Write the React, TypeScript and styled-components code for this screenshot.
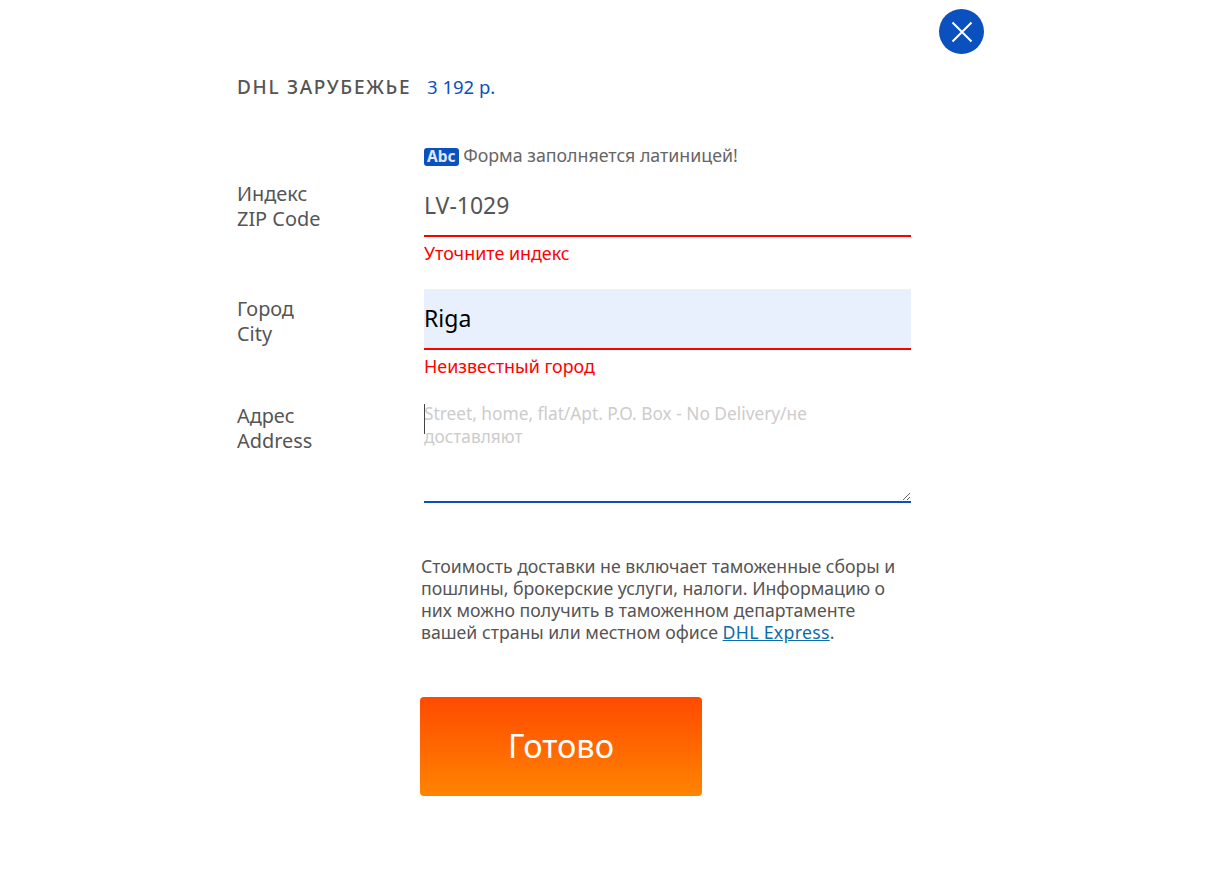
import * as React from 'react';
import styled, { createGlobalStyle } from 'styled-components';

const fontStack = '"Noto Sans", "Open Sans", "Liberation Sans", sans-serif';

const GlobalStyle = createGlobalStyle`
  html, body {
    margin: 0;
    padding: 0;
    background: #fff;
    font-family: ${fontStack};
    color: #555;
  }
`;

const fields = [
  { ru: 'Индекс', en: 'ZIP Code', value: 'LV-1029', error: 'Уточните индекс', top: 5 },
  { ru: 'Город', en: 'City', value: 'Riga', error: 'Неизвестный город', active: true, top: 7 },
];

const App: React.FC = () => (
  <>
    <GlobalStyle />
    <Page>
      <Modal>
        <CloseButton aria-label="Закрыть">
          <svg width="22" height="22" viewBox="0 0 22 22">
            <path d="M1.5 1.5 L20.5 20.5 M20.5 1.5 L1.5 20.5" stroke="#fff" strokeWidth="2" fill="none" />
          </svg>
        </CloseButton>

        <Header>
          <Title>DHL ЗАРУБЕЖЬЕ</Title>
          <Price>3 192 р.</Price>
        </Header>

        <Notice>
          <AbcBadge>Abc</AbcBadge> Форма заполняется латиницей!
        </Notice>

        {fields.map(({ ru, en, value, error, active, top }) => (
          <Row key={en}>
            <Label $top={top}>
              {ru}
              <br />
              {en}
            </Label>
            <Control>
              <TextInput defaultValue={value} $active={active} />
              <ErrorText>{error}</ErrorText>
            </Control>
          </Row>
        ))}

        <Row>
          <Label $top={1}>
            Адрес
            <br />
            Address
          </Label>
          <Control>
            <Caret />
            <TextArea placeholder="Street, home, flat/Apt. P.O. Box - No Delivery/не доставляют" />
          </Control>
        </Row>

        <Note>
          Стоимость доставки не включает таможенные сборы и пошлины, брокерские услуги, налоги.
          Информацию о них можно получить в таможенном департаменте вашей страны или местном офисе{' '}
          <NoteLink href="#dhl">DHL Express</NoteLink>.
        </Note>

        <SubmitButton>Готово</SubmitButton>
      </Modal>
    </Page>
  </>
);

export default App;

const Page = styled.div`
  width: 1210px;
  height: 869px;
  overflow: hidden;
`;

const Modal = styled.div`
  position: relative;
  box-sizing: border-box;
  width: 984px;
  padding: 73px 0 0 237px;
`;

const CloseButton = styled.button`
  position: absolute;
  top: 9px;
  right: 0;
  display: flex;
  align-items: center;
  justify-content: center;
  width: 45px;
  height: 45px;
  padding: 0;
  border: 0;
  border-radius: 50%;
  background: #0a50bf;
`;

const Header = styled.div`
  display: flex;
  align-items: baseline;
  height: 27px;
`;

const Title = styled.span`
  width: 190px;
  font-size: 19px;
  font-weight: 500;
  line-height: 27px;
  letter-spacing: 1.7px;
  white-space: nowrap;
  color: #555;
`;

const Price = styled.span`
  font-size: 18.5px;
  line-height: 27px;
  color: #0a50bf;
`;

const Notice = styled.div`
  margin: 43px 0 0 187px;
  height: 33px;
  font-size: 17.8px;
  line-height: 24px;
  white-space: nowrap;
  color: #666;
`;

const AbcBadge = styled.span`
  display: inline-block;
  height: 18px;
  padding: 0 3px;
  border-radius: 3px;
  background: #0a50bf;
  color: #dfe8f8;
  font-size: 15.5px;
  font-weight: 700;
  line-height: 17px;
`;

const Row = styled.div`
  display: flex;
  width: 674px;
`;

const Label = styled.div<{ $top: number }>`
  width: 187px;
  flex: none;
  padding-top: ${(p) => p.$top}px;
  font-size: 19.9px;
  line-height: 25px;
  color: #555;
`;

const Control = styled.div`
  position: relative;
  width: 487px;
`;

const TextInput = styled.input<{ $active?: boolean }>`
  display: block;
  box-sizing: border-box;
  width: 100%;
  height: 61px;
  padding: 0 0 2px;
  border: 0;
  border-bottom: 2px solid #f00;
  border-radius: 0;
  outline: 0;
  font-family: ${fontStack};
  font-size: 23px;
  background: ${(p) => (p.$active ? '#e8f0fe' : '#fff')};
  color: ${(p) => (p.$active ? '#000' : '#555')};
`;

const ErrorText = styled.div`
  height: 52px;
  padding-top: 3px;
  box-sizing: border-box;
  font-size: 17.9px;
  line-height: 27px;
  color: #f00;
`;

const Caret = styled.span`
  position: absolute;
  top: 2px;
  left: 0;
  width: 1px;
  height: 30px;
  background: #444;
`;

const TextArea = styled.textarea`
  display: block;
  box-sizing: border-box;
  width: 100%;
  height: 101px;
  padding: 1px 10px 0 0;
  border: 0;
  border-bottom: 2px solid #0a50bf;
  border-radius: 0;
  outline: 0;
  background: #fff;
  font-family: ${fontStack};
  font-size: 17.3px;
  line-height: 22.5px;
  color: #555;

  &::placeholder {
    color: #ccc;
    opacity: 1;
  }
`;

const Note = styled.p`
  width: 490px;
  margin: 52px 0 0 184px;
  font-size: 17.7px;
  line-height: 22px;
  color: #555;
`;

const NoteLink = styled.a`
  color: #0d6ea8;
  letter-spacing: 0.3px;
  text-decoration: underline;
`;

const SubmitButton = styled.button`
  display: block;
  width: 282px;
  height: 99px;
  margin: 54px 0 0 183px;
  padding: 0 0 2px;
  border: 0;
  border-radius: 4px;
  background: linear-gradient(180deg, #ff4a00 0%, #ff8400 100%);
  color: #fff;
  font-family: ${fontStack};
  font-size: 32.5px;
`;
